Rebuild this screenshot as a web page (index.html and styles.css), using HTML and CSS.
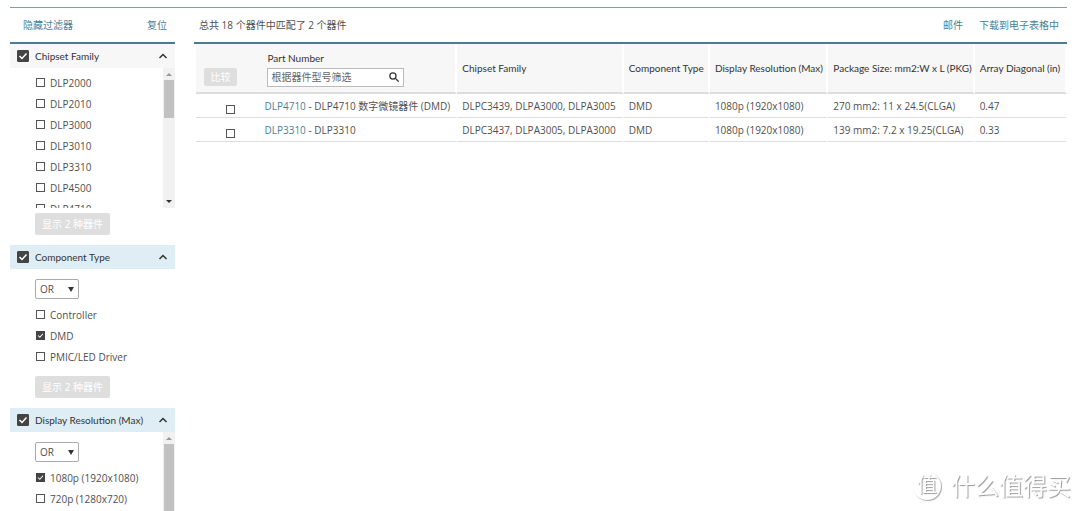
FILE: index.html
```html
<!DOCTYPE html>
<html lang="zh-CN">
<head>
<meta charset="utf-8">
<meta name="viewport" content="width=device-width, initial-scale=1">
<title>器件筛选</title>
<link rel="stylesheet" href="styles.css">
</head>
<body>
<div class="page">
  <aside class="filters">
    <div class="bar">
      <a href="#">隐藏过滤器</a>
      <a href="#">复位</a>
    </div>

    <section class="panel">
      <div class="panel-head plain">
        <label><input class="check large" type="checkbox" checked>Chipset Family</label>
        <button class="toggle" type="button" aria-label="Chipset Family"><svg viewBox="0 0 10 10"><path d="M1.5 7 5 3.500 8.500 7"/></svg></button>
      </div>
      <div class="scroller short">
        <div class="options">
          <label><input class="check" type="checkbox">DLP2000</label>
          <label><input class="check" type="checkbox">DLP2010</label>
          <label><input class="check" type="checkbox">DLP3000</label>
          <label><input class="check" type="checkbox">DLP3010</label>
          <label><input class="check" type="checkbox">DLP3310</label>
          <label><input class="check" type="checkbox">DLP4500</label>
          <label><input class="check" type="checkbox">DLP4710</label>
        </div>
        <div class="track">
          <svg class="arrow dim" viewBox="0 0 12 12"><path d="M3 8 6 5 9 8Z"/></svg>
          <div class="thumb"></div>
          <svg class="arrow end" viewBox="0 0 12 12"><path d="M3 4 6 7 9 4Z"/></svg>
        </div>
      </div>
      <button class="apply" type="button">显示 2 种器件</button>
    </section>

    <section class="panel">
      <div class="panel-head">
        <label><input class="check large" type="checkbox" checked>Component Type</label>
        <button class="toggle" type="button" aria-label="Component Type"><svg viewBox="0 0 10 10"><path d="M1.5 7 5 3.500 8.500 7"/></svg></button>
      </div>
      <div class="options">
        <span class="mode"><select aria-label="Component Type"><option>OR</option><option>AND</option></select></span>
        <label><input class="check" type="checkbox">Controller</label>
        <label><input class="check" type="checkbox" checked>DMD</label>
        <label><input class="check" type="checkbox">PMIC/LED Driver</label>
      </div>
      <button class="apply lower" type="button">显示 2 种器件</button>
    </section>

    <section class="panel last">
      <div class="panel-head">
        <label><input class="check large" type="checkbox" checked>Display Resolution (Max)</label>
        <button class="toggle" type="button" aria-label="Display Resolution (Max)"><svg viewBox="0 0 10 10"><path d="M1.5 7 5 3.500 8.500 7"/></svg></button>
      </div>
      <div class="scroller">
        <div class="options">
          <span class="mode"><select aria-label="Display Resolution"><option>OR</option><option>AND</option></select></span>
          <label><input class="check" type="checkbox" checked>1080p (1920x1080)</label>
          <label><input class="check" type="checkbox">720p (1280x720)</label>
        </div>
        <div class="track">
          <svg class="arrow dim" viewBox="0 0 12 12"><path d="M3 8 6 5 9 8Z"/></svg>
          <div class="thumb full"></div>
        </div>
      </div>
    </section>
  </aside>

  <main class="results">
    <div class="bar">
      <span>总共 18 个器件中匹配了 2 个器件</span>
      <nav><a href="#">邮件</a><a href="#">下载到电子表格中</a></nav>
    </div>
    <table>
      <colgroup><col class="c-pick"><col class="c-part"><col class="c-chip"><col class="c-type"><col class="c-res"><col class="c-pkg"><col class="c-diag"></colgroup>
      <thead>
        <tr>
          <th class="pick"><button class="compare" type="button">比较</button></th>
          <th class="part">
            <label for="part">Part Number</label>
            <div class="search">
              <input id="part" type="text" placeholder="根据器件型号筛选">
              <svg viewBox="0 0 12 12"><circle cx="4.700" cy="4.700" r="3.700"/><path d="M7.400 7.400 11.500 11.500"/></svg>
            </div>
          </th>
          <th>Chipset Family</th>
          <th>Component Type</th>
          <th>Display Resolution (Max)</th>
          <th>Package Size: mm2:W x L (PKG)</th>
          <th>Array Diagonal (in)</th>
        </tr>
      </thead>
      <tbody>
        <tr>
          <td class="pick"><input class="check" type="checkbox" aria-label="DLP4710"></td>
          <td class="part"><a href="#">DLP4710</a> - DLP4710 数字微镜器件 (DMD)</td>
          <td>DLPC3439, DLPA3000, DLPA3005</td>
          <td>DMD</td>
          <td>1080p (1920x1080)</td>
          <td>270 mm2: 11 x 24.5(CLGA)</td>
          <td>0.47</td>
        </tr>
        <tr>
          <td class="pick"><input class="check" type="checkbox" aria-label="DLP3310"></td>
          <td class="part"><a href="#">DLP3310</a> - DLP3310</td>
          <td>DLPC3437, DLPA3005, DLPA3000</td>
          <td>DMD</td>
          <td>1080p (1920x1080)</td>
          <td>139 mm2: 7.2 x 19.25(CLGA)</td>
          <td>0.33</td>
        </tr>
      </tbody>
    </table>
  </main>
</div>
<div class="watermark"><span class="seal">值</span><span>什么值得买</span></div>
</body>
</html>
```

FILE: styles.css
```css
* { box-sizing: border-box; }

body {
  margin: 0;
  background: #fff;
  color: #505050;
  font: 10px/16px "Open Sans", "Noto Sans CJK SC", sans-serif;
}

a { color: #4a7f96; text-decoration: none; }

button, input, select { font: inherit; color: inherit; margin: 0; }

.page {
  display: flex;
  gap: 19px;
  height: calc(100vh - 7px);
  margin: 7px 13px 0 10px;
  overflow: hidden;
  border-top: 1px solid #7f9dab;
}

.filters { display: flex; flex-direction: column; flex: 0 0 165px; }

.results { flex: 1; min-width: 0; }

.bar {
  display: flex;
  align-items: center;
  justify-content: space-between;
  height: 36px;
  border-bottom: 2px solid #4d7b90;
}

.filters .bar { flex: none; padding: 0 8px 0 13px; }
.results .bar { padding: 0 8px 0 5px; }
.bar nav { display: flex; gap: 16px; }

.panel { flex: none; margin-bottom: 10px; }
.panel.last { display: flex; flex: 1; flex-direction: column; margin: 0; min-height: 0; }

.panel-head {
  display: flex;
  align-items: center;
  justify-content: space-between;
  height: 24px;
  padding: 0 7px 0 7px;
  background: #dfeef5;
  color: #333;
  font-family: Lato, "Noto Sans CJK SC", sans-serif;
}

.panel-head.plain { background: #f7f7f7; }
.panel-head label { display: flex; align-items: center; gap: 6px; white-space: nowrap; }

.toggle { display: flex; padding: 0; border: 0; background: none; }
.toggle svg { width: 10px; height: 10px; fill: none; stroke: #333; stroke-width: 1.5; }

.check {
  appearance: none;
  flex: none;
  width: 9px;
  height: 9px;
  border: 1px solid #555;
  background: #fff;
}

.check.large { width: 12px; height: 12px; border-radius: 1px; }

.check:checked {
  border-color: #444;
  background: #444 url("data:image/svg+xml,%3Csvg xmlns='http://www.w3.org/2000/svg' viewBox='0 0 10 10'%3E%3Cpath d='M1.500 5 4 7.500 8.500 2.500' fill='none' stroke='white' stroke-width='1.500'/%3E%3C/svg%3E") center / 100% no-repeat;
}

.scroller { display: flex; flex: 1; min-height: 0; overflow: hidden; }
.scroller.short { height: 140px; }

.options { display: flex; flex: 1; flex-direction: column; padding: 4px 0 0 26px; }
.options label { display: flex; flex: none; align-items: center; gap: 5px; height: 21px; white-space: nowrap; }

.mode { position: relative; width: 44px; height: 20px; margin: 6px 0 5px -1px; }
.mode select {
  appearance: none;
  display: block;
  width: 100%;
  height: 100%;
  padding: 0 4px;
  border: 1px solid #aaa;
  border-radius: 2px;
  background: #fff;
}
.mode::after {
  content: "";
  position: absolute;
  top: 8px;
  right: 5px;
  border: solid transparent;
  border-width: 5px 3px 0;
  border-top-color: #333;
}

.track { display: flex; flex: 0 0 12px; flex-direction: column; align-items: center; background: #f1f1f1; }
.arrow { width: 12px; height: 12px; fill: #333; }
.arrow.dim { fill: #999; }
.arrow.end { margin-top: auto; }
.thumb { width: 10px; height: 38px; background: #c1c1c1; }
.thumb.full { flex: 1; }

.apply, .compare {
  display: block;
  border: 0;
  border-radius: 2px;
  background: #dedede;
  color: #fff;
  white-space: nowrap;
}
.apply { width: 75px; height: 22px; margin: 5px 0 0 25px; padding: 0; }
.apply.lower { margin-top: 9px; }
.compare { width: 33px; height: 18px; padding: 0; line-height: 18px; }

table {
  width: calc(100% - 2px);
  margin-left: 2px;
  border-spacing: 0;
  table-layout: fixed;
}
.c-pick { width: 7.4%; }
.c-part { width: 22.6%; }
.c-chip { width: 19.1%; }
.c-type { width: 9.9%; }
.c-res { width: 13.6%; }
.c-pkg { width: 16.8%; }
.c-diag { width: 10.6%; }

th, td {
  padding: 0 0 0 5px;
  border-right: 2px solid #fff;
  text-align: left;
  white-space: nowrap;
}
th {
  height: 50px;
  border-bottom: 2px solid #ddd;
  background: #f7f7f7;
  color: #333;
  font-family: Lato, "Noto Sans CJK SC", sans-serif;
  font-weight: 400;
}
td { height: 24px; border-bottom: 1px solid #ddd; }
th.pick { padding: 17px 0 0 8px; border-right: 0; }
td.pick { padding: 7px 0 0 30px; border-right: 0; }
td.pick .check { display: block; }
th.part { padding-left: 7px; }
td.part { padding-left: 4px; }
th.part label { display: block; }

.search {
  display: flex;
  align-items: center;
  width: 137px;
  height: 19px;
  margin-top: 2px;
  padding: 0 4px 0 3px;
  border: 1px solid #bbb;
  background: #fff;
}
.search input { flex: 1; min-width: 0; height: 17px; padding: 0; border: 0; outline: 0; background: none; }
.search input::placeholder { color: #666; }
.search svg { width: 10px; height: 10px; fill: none; stroke: #333; stroke-width: 1.5; }

.watermark {
  position: fixed;
  right: 9px;
  bottom: 9px;
  display: flex;
  align-items: center;
  gap: 10px;
  color: #fff;
  font-size: 24px;
  line-height: 32px;
  text-shadow: 1px 1px 1px #999;
}
.seal {
  width: 28px;
  height: 28px;
  border-radius: 50%;
  box-shadow: 1px 1px 1px #aaa;
  font-size: 20px;
  line-height: 26px;
  text-align: center;
}
```
